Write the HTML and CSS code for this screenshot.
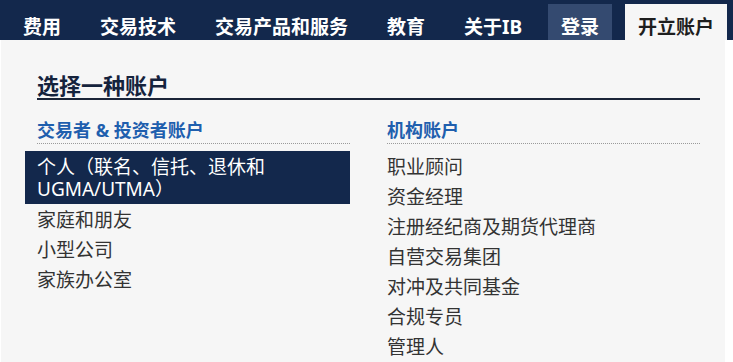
FILE: index.html
```html
<!DOCTYPE html>
<html lang="zh-CN">
<head>
<meta charset="utf-8">
<title>选择一种账户</title>
<link rel="stylesheet" href="styles.css">
</head>
<body>
<nav class="topnav">
  <a class="nav-item" href="#">费用</a>
  <a class="nav-item" href="#">交易技术</a>
  <a class="nav-item" href="#">交易产品和服务</a>
  <a class="nav-item" href="#">教育</a>
  <a class="nav-item" href="#">关于IB</a>
  <a class="nav-item nav-login" href="#">登录</a>
  <a class="nav-item nav-open" href="#">开立账户</a>
</nav>
<main class="panel">
  <h2 class="panel-title">选择一种账户</h2>
  <div class="cols">
    <section class="col">
      <h3 class="col-title">交易者 &amp; 投资者账户</h3>
      <ul class="list">
        <li class="item item-active">个人（联名、信托、退休和UGMA/UTMA）</li>
        <li class="item">家庭和朋友</li>
        <li class="item">小型公司</li>
        <li class="item">家族办公室</li>
      </ul>
    </section>
    <section class="col">
      <h3 class="col-title">机构账户</h3>
      <ul class="list">
        <li class="item">职业顾问</li>
        <li class="item">资金经理</li>
        <li class="item">注册经纪商及期货代理商</li>
        <li class="item">自营交易集团</li>
        <li class="item">对冲及共同基金</li>
        <li class="item">合规专员</li>
        <li class="item">管理人</li>
      </ul>
    </section>
  </div>
</main>
</body>
</html>
```

FILE: styles.css
```css
* { box-sizing: border-box; }
html, body { margin: 0; padding: 0; }
body {
  background: #ffffff;
  font-family: "Noto Sans", "Noto Sans CJK SC", sans-serif;
  height: 362px;
  overflow: hidden;
}
.topnav {
  display: flex;
  align-items: flex-end;
  height: 40px;
  padding-left: 10px;
  background: #13284c;
}
.nav-item {
  display: block;
  height: 36px;
  padding: 10px 13px 0;
  margin-right: 13px;
  line-height: 26px;
  font-size: 19px;
  font-weight: 700;
  color: #ffffff;
  text-decoration: none;
  white-space: nowrap;
}
.nav-login { background: #344a70; }
.nav-open {
  background: #f6f6f6;
  color: #1e1e1e;
  margin-right: 0;
}
.panel {
  margin-left: 1px;
  width: 724px;
  height: 322px;
  background: #f6f6f6;
  padding: 32px 25px 0 36px;
}
.panel-title {
  margin: 0;
  font-size: 22px;
  line-height: 26px;
  font-weight: 700;
  color: #15233d;
  border-bottom: 2px solid #1a2438;
}
.cols {
  display: grid;
  grid-template-columns: 313px 313px;
  column-gap: 37px;
  margin-top: 19px;
}
.col-title {
  margin: 0 0 7px;
  font-size: 18px;
  line-height: 22px;
  font-weight: 700;
  color: #1f5fae;
  padding-bottom: 2px;
  border-bottom: 1px dotted #9a9a9a;
}
.list {
  list-style: none;
  margin: 0;
  padding: 0;
}
.item {
  margin-left: -12px;
  padding: 5px 0 3px 12px;
  font-size: 19px;
  line-height: 22px;
  color: #333333;
}
.item-active {
  padding-bottom: 4px;
  background: #13284c;
  color: #ffffff;
}
```
